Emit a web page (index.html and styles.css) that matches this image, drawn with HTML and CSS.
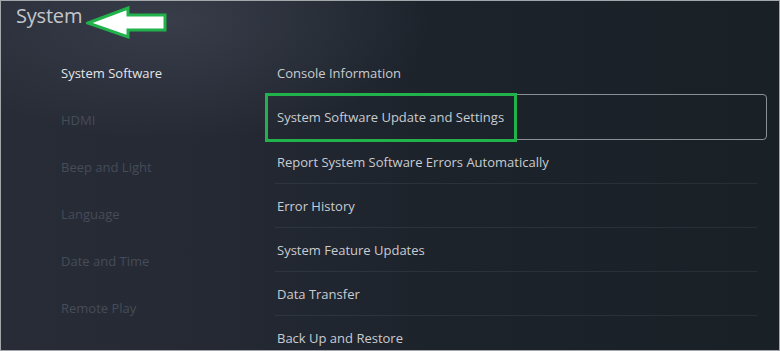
FILE: index.html
```html
<!DOCTYPE html>
<html lang="en">
<head>
<meta charset="utf-8">
<title>System</title>
<link rel="stylesheet" href="styles.css">
</head>
<body>
<div class="screen">
  <header class="header">
    <h1 class="title">System</h1>
    <svg class="arrow" width="82" height="34" viewBox="0 0 82 34" aria-hidden="true">
      <polygon points="2,17 42,2 42,9 79,9 79,24 42,24 42,31" fill="#ffffff" stroke="#22b24c" stroke-width="3" stroke-linejoin="miter"/>
    </svg>
  </header>
  <main class="content">
    <nav class="side">
      <div class="side-item active">System Software</div>
      <div class="side-item">HDMI</div>
      <div class="side-item">Beep and Light</div>
      <div class="side-item">Language</div>
      <div class="side-item">Date and Time</div>
      <div class="side-item">Remote Play</div>
      <div class="side-item">System Settings</div>
    </nav>
    <section class="list">
      <div class="row first">Console Information</div>
      <div class="row selected">System Software Update and Settings<span class="highlight"></span></div>
      <div class="row">Report System Software Errors Automatically</div>
      <div class="row">Error History</div>
      <div class="row">System Feature Updates</div>
      <div class="row">Data Transfer</div>
      <div class="row last">Back Up and Restore</div>
    </section>
  </main>
</div>
</body>
</html>
```
FILE: styles.css
```css
html, body {
  margin: 0;
  padding: 0;
}
body {
  width: 780px;
  height: 351px;
  overflow: hidden;
  font-family: "Open Sans", "Noto Sans", sans-serif;
}
.screen {
  box-sizing: border-box;
  width: 780px;
  height: 351px;
  border: 1px solid #a3a6aa;
  overflow: hidden;
  background:
    radial-gradient(ellipse 260px 120px at 170px 20px, rgba(90, 96, 110, 0.35), rgba(90, 96, 110, 0) 100%),
    linear-gradient(to right, #272c37 0%, #242934 28%, #1d232b 55%, #192026 100%);
}
.header {
  height: 50px;
  display: flex;
  align-items: flex-start;
  padding-left: 15px;
}
.title {
  margin: 0;
  padding-top: 1px;
  font-size: 20px;
  font-weight: 400;
  line-height: 28px;
  color: #c4c6cb;
  letter-spacing: -0.2px;
}
.arrow {
  margin-left: 4px;
  margin-top: 5px;
}
.content {
  display: flex;
}
.side {
  width: 204px;
  padding-left: 60px;
  margin-top: -1px;
  display: flex;
  flex-direction: column;
}
.side-item {
  height: 47px;
  line-height: 47px;
  font-size: 13px;
  color: #464c58;
  white-space: nowrap;
}
.side-item.active {
  color: #e4e5e8;
}
.list {
  width: 502px;
  display: flex;
  flex-direction: column;
}
.row {
  position: relative;
  height: 44px;
  line-height: 44px;
  padding-left: 12px;
  font-size: 13px;
  color: #c9ccd1;
  white-space: nowrap;
}
.row::after {
  content: "";
  position: absolute;
  left: 10px;
  right: 10px;
  bottom: 0;
  height: 1px;
  background: rgba(120, 130, 140, 0.16);
}
.row.first::after,
.row.selected::after,
.row.last::after {
  display: none;
}
.row.selected {
  height: 44px;
  line-height: 44px;
  border: 1px solid #8a9096;
  border-radius: 4px;
  margin-top: -1px;
  padding-left: 11px;
}
.highlight {
  position: absolute;
  left: -1px;
  top: -2px;
  width: 246px;
  height: 43px;
  border: 3px solid #22b24c;
}
```
